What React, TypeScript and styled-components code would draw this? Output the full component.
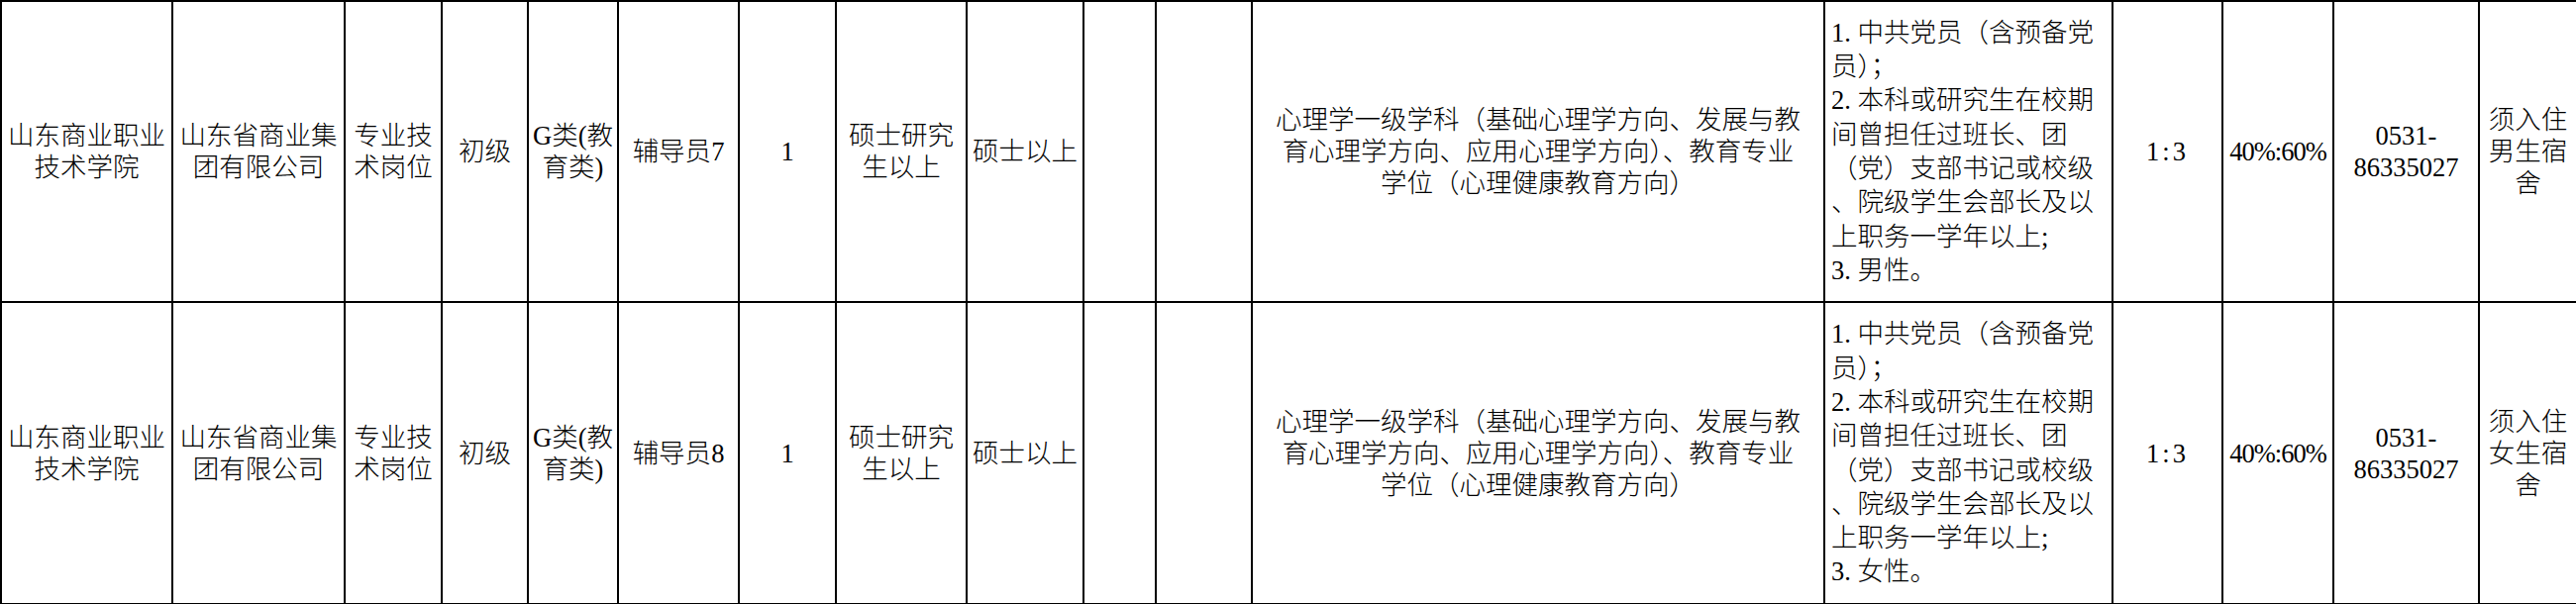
import React from "react";
import styled, { createGlobalStyle } from "styled-components";

const GlobalStyle = createGlobalStyle`
  html, body {
    margin: 0;
    padding: 0;
    background: #ffffff;
  }
  body {
    font-family: "Liberation Serif", "Noto Sans CJK SC", serif;
    color: #000000;
  }
`;

const Sheet = styled.table`
  width: 2601px;
  border-collapse: collapse;
  table-layout: fixed;
`;

const Col = styled.col<{ $w: number }>`
  width: ${(p) => p.$w}px;
`;

const Row = styled.tr<{ $h: number }>`
  height: ${(p) => p.$h}px;
`;

const Cell = styled.td<{ $align?: "left" | "center"; $leading?: number }>`
  border: 2px solid #000000;
  padding: ${(p) => (p.$align === "left" ? "0 2px 0 6px" : "0 3px")};
  text-align: ${(p) => p.$align ?? "center"};
  vertical-align: middle;
  font-size: 26.5px;
  font-weight: 300;
  line-height: ${(p) => p.$leading ?? 32}px;
  white-space: nowrap;
  overflow: hidden;
`;

const Spaced = styled.span<{ $gap: number }>`
  letter-spacing: ${(p) => p.$gap}px;
`;

const widths = [173, 174, 98, 87, 91, 122, 98, 132, 118, 73, 97, 578, 291, 111, 112, 147, 99];

type Post = { no: string; sex: string; dorm: string };

const posts: Post[] = [
  { no: "7", sex: "男", dorm: "男生宿" },
  { no: "8", sex: "女", dorm: "女生宿" },
];

const Lines = ({ lines }: { lines: string[] }) => (
  <>
    {lines.map((l, i) => (
      <React.Fragment key={i}>
        {i > 0 && <br />}
        {l}
      </React.Fragment>
    ))}
  </>
);

const App = () => (
  <>
    <GlobalStyle />
    <Sheet>
      <colgroup>
        {widths.map((w, i) => (
          <Col key={i} $w={w} />
        ))}
      </colgroup>
      <tbody>
        {posts.map((p, i) => (
          <Row key={p.no} $h={i === 0 ? 304 : 305}>
            <Cell>
              <Lines lines={["山东商业职业", "技术学院"]} />
            </Cell>
            <Cell>
              <Lines lines={["山东省商业集", "团有限公司"]} />
            </Cell>
            <Cell>
              <Lines lines={["专业技", "术岗位"]} />
            </Cell>
            <Cell>初级</Cell>
            <Cell>
              <Lines lines={["G类(教", "育类)"]} />
            </Cell>
            <Cell>辅导员{p.no}</Cell>
            <Cell>1</Cell>
            <Cell>
              <Lines lines={["硕士研究", "生以上"]} />
            </Cell>
            <Cell>硕士以上</Cell>
            <Cell />
            <Cell />
            <Cell>
              <Lines
                lines={[
                  "心理学一级学科（基础心理学方向、发展与教",
                  "育心理学方向、应用心理学方向）、教育专业",
                  "学位（心理健康教育方向）",
                ]}
              />
            </Cell>
            <Cell $align="left" $leading={34.3}>
              <Lines
                lines={[
                  "1. 中共党员（含预备党",
                  "员）；",
                  "2. 本科或研究生在校期",
                  "间曾担任过班长、团",
                  "（党）支部书记或校级",
                  "、院级学生会部长及以",
                  "上职务一学年以上;",
                  `3. ${p.sex}性。`,
                ]}
              />
            </Cell>
            <Cell>
              <Spaced $gap={3}>1:3</Spaced>
            </Cell>
            <Cell>
              <Spaced $gap={-1}>40%:60%</Spaced>
            </Cell>
            <Cell>
              <Lines lines={["0531-", "86335027"]} />
            </Cell>
            <Cell>
              <Lines lines={["须入住", p.dorm, "舍"]} />
            </Cell>
          </Row>
        ))}
      </tbody>
    </Sheet>
  </>
);

export default App;
